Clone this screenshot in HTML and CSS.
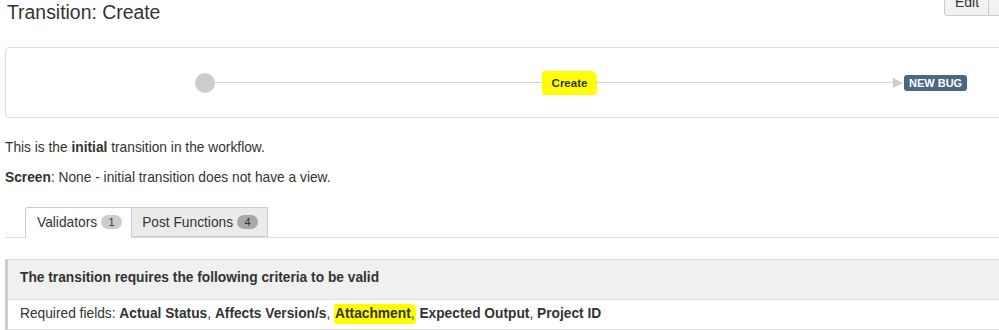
FILE: index.html
```html
<!DOCTYPE html>
<html>
<head>
<meta charset="utf-8">
<link rel="stylesheet" href="styles.css">
</head>
<body>
<div class="page">
  <div class="header">
    <h1 class="title">Transition: Create</h1>
    <div class="actions">
      <button class="btn">Edit</button>
      <button class="btn btn-more">&nbsp;</button>
    </div>
  </div>

  <div class="workflow">
    <span class="node"></span>
    <span class="line line-a"></span>
    <span class="trans-label">Create</span>
    <span class="line line-b"></span>
    <span class="arrow"></span>
    <span class="status">NEW BUG</span>
  </div>

  <p class="desc">This is the <b>initial</b> transition in the workflow.</p>
  <p class="desc"><b>Screen</b>: None - initial transition does not have a view.</p>

  <div class="tabs">
    <div class="tab active">Validators <span class="count">1</span></div>
    <div class="tab">Post Functions <span class="count dark">4</span></div>
  </div>

  <div class="panel">
    <div class="panel-head">The transition requires the following criteria to be valid</div>
    <div class="panel-body">Required fields: <b>Actual Status</b>, <b>Affects Version/s</b>, <span class="mark"><b>Attachment</b>,</span> <b>Expected Output</b>, <b>Project ID</b></div>
  </div>
</div>
</body>
</html>
```

FILE: styles.css
```css
html, body {
  margin: 0;
  padding: 0;
  background: #fff;
  overflow: hidden;
}
body {
  width: 999px;
  height: 330px;
  font-family: "Liberation Sans", Arial, sans-serif;
  font-size: 13.75px;
  line-height: 20px;
  color: #333;
}
.page {
  padding-left: 5px;
}
.header {
  display: flex;
  justify-content: space-between;
  align-items: flex-start;
  height: 47px;
}
.title {
  margin: 0;
  padding-left: 2px;
  font-size: 19.4px;
  font-weight: normal;
  line-height: 24px;
  color: #333;
}
.actions {
  display: flex;
  margin-top: -12px;
  margin-right: -40px;
}
.btn {
  font-family: "Liberation Sans", Arial, sans-serif;
  font-size: 14px;
  color: #333;
  background: #f2f2f2;
  border: 1px solid #ccc;
  border-radius: 3px 0 0 3px;
  height: 28px;
  width: 45px;
  padding: 0;
  padding-left: 1px;
  line-height: 20px;
}
.btn-more {
  border-left: 0;
  border-radius: 0 3px 3px 0;
  width: 50px;
}
.workflow {
  display: flex;
  align-items: center;
  height: 69px;
  margin-right: -20px;
  border: 1px solid #ddd;
  border-radius: 4px;
  padding-left: 189px;
}
.node {
  width: 20px;
  height: 20px;
  border-radius: 50%;
  background: #ccc;
  flex: none;
}
.line {
  height: 1px;
  background: #d4d4d4;
  flex: none;
}
.line-a { width: 327px; }
.line-b { width: 296px; }
.trans-label {
  flex: none;
  width: 55px;
  height: 24px;
  box-sizing: border-box;
  background: #ffff00;
  border-radius: 3px 6px 4px 2px;
  font-size: 11.5px;
  font-weight: bold;
  line-height: 24px;
  text-align: center;
  color: #333;
}
.arrow {
  flex: none;
  width: 0;
  height: 0;
  border-top: 5px solid transparent;
  border-bottom: 5px solid transparent;
  border-left: 10px solid #ccc;
  margin-right: 1px;
}
.status {
  flex: none;
  background: #4a6785;
  color: #fff;
  font-size: 11px;
  font-weight: bold;
  line-height: 16px;
  height: 16px;
  padding: 0 5px;
  border-radius: 3px;
}
.desc {
  margin: 0;
  margin-top: 10px;
}
.workflow + .desc {
  margin-top: 20px;
}
.tabs {
  display: flex;
  margin-top: 19px;
  padding-left: 20px;
  border-bottom: 1px solid #ddd;
  height: 30px;
}
.tab {
  box-sizing: border-box;
  height: 31px;
  padding: 5px 9px 5px 11px;
  border: 1px solid #ccc;
  border-bottom: 0;
  background: #ebebeb;
  color: #333;
  white-space: nowrap;
  display: flex;
  align-items: flex-start;
}
.tab + .tab {
  border-left: 0;
  padding-left: 10px;
  padding-right: 9px;
  height: 30px;
  border-bottom: 1px solid #ccc;
}
.tab.active {
  background: #fff;
  border-radius: 3px 0 0 0;
}
.count {
  display: inline-block;
  margin-left: 4px;
  margin-top: 2px;
  width: 21px;
  height: 14px;
  border-radius: 7px;
  background: #ccc;
  font-size: 11px;
  line-height: 14px;
  text-align: center;
  color: #333;
}
.count.dark {
  background: #a8a8a8;
}
.panel {
  margin-top: 21px;
  margin-right: -20px;
  border-left: 3px solid #ccc;
  border-top: 1px solid #ddd;
  border-bottom: 1px solid #ddd;
}
.panel-head {
  background: #f0f0f0;
  font-weight: bold;
  padding: 8px 12px 11px;
  border-bottom: 1px solid #ddd;
}
.panel-body {
  padding: 4px 12px 5px;
}
.mark {
  background: #ffff00;
  padding: 2px 1px 3px;
  border-radius: 2px 5px 3px 4px;
}
```
